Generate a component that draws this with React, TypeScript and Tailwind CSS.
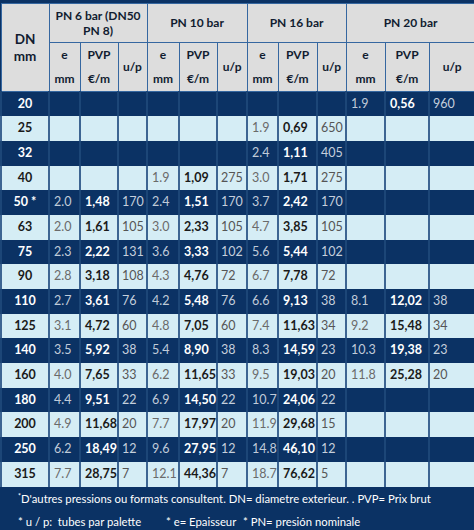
import React from "react";

type Group = [string, string, string] | null;
type Row = { dn: string; groups: Group[] };

const rows: Row[] = [
  { dn: "20", groups: [null, null, null, ["1.9", "0,56", "960"]] },
  { dn: "25", groups: [null, null, ["1.9", "0,69", "650"], null] },
  { dn: "32", groups: [null, null, ["2.4", "1,11", "405"], null] },
  { dn: "40", groups: [null, ["1.9", "1,09", "275"], ["3.0", "1,71", "275"], null] },
  { dn: "50 *", groups: [["2.0", "1,48", "170"], ["2.4", "1,51", "170"], ["3.7", "2,42", "170"], null] },
  { dn: "63", groups: [["2.0", "1,61", "105"], ["3.0", "2,33", "105"], ["4.7", "3,85", "105"], null] },
  { dn: "75", groups: [["2.3", "2,22", "131"], ["3.6", "3,33", "102"], ["5.6", "5,44", "102"], null] },
  { dn: "90", groups: [["2.8", "3,18", "108"], ["4.3", "4,76", "72"], ["6.7", "7,78", "72"], null] },
  { dn: "110", groups: [["2.7", "3,61", "76"], ["4.2", "5,48", "76"], ["6.6", "9,13", "38"], ["8.1", "12,02", "38"]] },
  { dn: "125", groups: [["3.1", "4,72", "60"], ["4.8", "7,05", "60"], ["7.4", "11,63", "34"], ["9.2", "15,48", "34"]] },
  { dn: "140", groups: [["3.5", "5,92", "38"], ["5.4", "8,90", "38"], ["8.3", "14,59", "23"], ["10.3", "19,38", "23"]] },
  { dn: "160", groups: [["4.0", "7,65", "33"], ["6.2", "11,65", "33"], ["9.5", "19,03", "20"], ["11.8", "25,28", "20"]] },
  { dn: "180", groups: [["4.4", "9,51", "22"], ["6.9", "14,50", "22"], ["10.7", "24,06", "22"], null] },
  { dn: "200", groups: [["4.9", "11,68", "20"], ["7.7", "17,97", "20"], ["11.9", "29,68", "15"], null] },
  { dn: "250", groups: [["6.2", "18,49", "12"], ["9.6", "27,95", "12"], ["14.8", "46,10", "12"], null] },
  { dn: "315", groups: [["7.7", "28,75", "7"], ["12.1", "44,36", "7"], ["18.7", "76,62", "5"], null] },
];

const widths = [48, 31, 38, 29, 32, 38, 30, 31, 39, 29, 39, 44, 46];

const headCell = "border border-[#3567a0] bg-[#dddddd] text-[#111c30] font-bold text-center align-middle";

export default function App() {
  return (
    <div
      className="w-[474px] h-[530px] bg-[#0b3264] overflow-hidden"
      style={{ fontFamily: "Lato, 'Open Sans', sans-serif" }}
    >
      <div className="h-[3px] bg-[#0b3264]" />
      <table className="table-fixed border-collapse w-[474px] text-[12.5px]">
        <colgroup>
          {widths.map((w, i) => (
            <col key={i} style={{ width: w }} />
          ))}
        </colgroup>
        <thead>
          <tr className="h-[39px]">
            <th rowSpan={2} className={`${headCell} text-[13.5px] leading-[17px]`}>
              DN
              <br />
              mm
            </th>
            <th colSpan={3} className={`${headCell} text-[12px] leading-[15px]`}>
              PN 6 bar (DN50
              <br />
              PN 8)
            </th>
            <th colSpan={3} className={`${headCell} text-[12px]`}>PN 10 bar</th>
            <th colSpan={3} className={`${headCell} text-[12px]`}>PN 16 bar</th>
            <th colSpan={3} className={`${headCell} text-[12px]`}>PN 20 bar</th>
          </tr>
          <tr className="h-[48px]">
            {[0, 1, 2, 3].map((g) => (
              <React.Fragment key={g}>
                <th className={`${headCell} text-[12px] leading-[24px]`}>
                  e
                  <br />
                  mm
                </th>
                <th className={`${headCell} text-[12px] leading-[24px]`}>
                  PVP
                  <br />
                  €/m
                </th>
                <th className={`${headCell} text-[12px]`}>u/p</th>
              </React.Fragment>
            ))}
          </tr>
        </thead>
        <tbody>
          {rows.map((r, i) => {
            const dark = i % 2 === 0;
            const cell = dark
              ? "border-x-2 border-[#1c4677] bg-[#0b3264]"
              : "border-x-2 border-[#3d6592] bg-[#d5edf5]";
            return (
              <tr key={r.dn} className="h-[24.7px]">
                <td
                  className={`${cell} text-center font-bold ${dark ? "text-white" : "text-[#1a1a1a]"}`}
                >
                  {r.dn}
                </td>
                {r.groups.map((g, gi) => (
                  <React.Fragment key={gi}>
                    <td className={`${cell} pl-[4px] ${dark ? "text-[#c0cbd9]" : "text-[#6a6a6a]"}`}>
                      {g ? g[0] : ""}
                    </td>
                    <td className={`${cell} pl-[4px] font-bold ${dark ? "text-white" : "text-[#1a1a1a]"}`}>
                      {g ? g[1] : ""}
                    </td>
                    <td className={`${cell} pl-[3px] ${dark ? "text-[#c5cfdc]" : "text-[#555555]"}`}>
                      {g ? g[2] : ""}
                    </td>
                  </React.Fragment>
                ))}
              </tr>
            );
          })}
        </tbody>
      </table>
      <div className="pl-[18px] text-white text-[11.3px] leading-[23px] whitespace-nowrap">
        <div>
          <sup className="text-[7px]">*</sup>D'autres pressions ou formats consultent. DN= diametre exterieur. . PVP= Prix brut
        </div>
        <div className="flex">
          <span className="w-[148px]">* u / p:&nbsp; tubes par palette</span>
          <span className="w-[77px]">* e= Epaisseur</span>
          <span>* PN= presión nominale</span>
        </div>
      </div>
    </div>
  );
}
